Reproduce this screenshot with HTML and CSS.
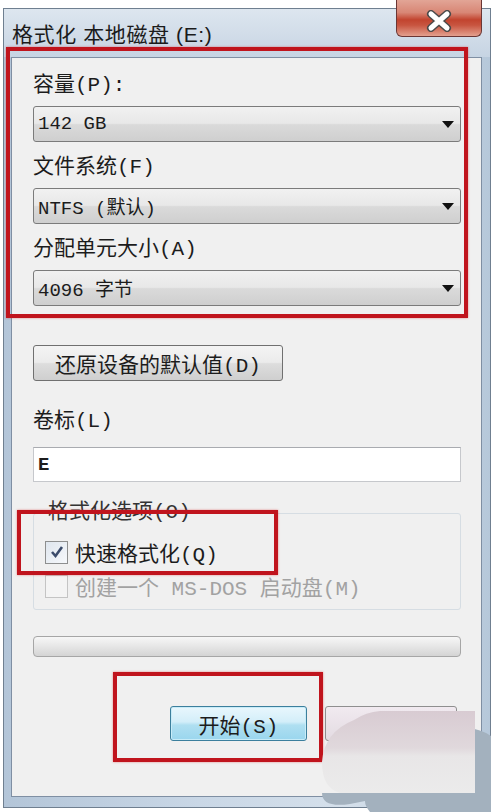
FILE: index.html
```html
<!DOCTYPE html>
<html lang="zh-CN">
<head>
<meta charset="utf-8">
<title>格式化 本地磁盘 (E:)</title>
<link rel="stylesheet" href="styles.css">
</head>
<body>
<div class="window">
  <div class="titlebar"><span class="title">格式化 本地磁盘 (E:)</span></div>
  <div class="close-btn">
    <svg width="30" height="22" viewBox="0 0 30 22">
      <path d="M7 4 L23 18 M23 4 L7 18" stroke="#4a4a4a" stroke-width="8" stroke-linecap="round"/>
      <path d="M7 4 L23 18 M23 4 L7 18" stroke="#ffffff" stroke-width="5" stroke-linecap="round"/>
    </svg>
  </div>
  <div class="client">
    <div class="label first">容量(P):</div>
    <div class="select"><span>142 GB</span><span class="arrow"></span></div>
    <div class="label">文件系统(F)</div>
    <div class="select"><span>NTFS (默认)</span><span class="arrow"></span></div>
    <div class="label">分配单元大小(A)</div>
    <div class="select"><span>4096 字节</span><span class="arrow"></span></div>
    <div class="btn restore">还原设备的默认值(D)</div>
    <div class="label vol">卷标(L)</div>
    <div class="input">E</div>
    <fieldset class="group">
      <legend>格式化选项(O)</legend>
      <div class="check-row">
        <span class="box checked">
          <svg width="16" height="16" viewBox="0 0 16 16"><path d="M3 8 L6.5 12 L13 3" fill="none" stroke="#3b4b6b" stroke-width="2.6"/></svg>
        </span>
        <span>快速格式化(Q)</span>
      </div>
      <div class="check-row disabled">
        <span class="box"></span>
        <span>创建一个 MS-DOS 启动盘(M)</span>
      </div>
    </fieldset>
    <div class="progress"></div>
    <div class="actions">
      <div class="btn start">开始(S)</div>
      <div class="btn closebtn">关闭</div>
    </div>
  </div>
  <div class="mark mark-a"></div>
  <div class="mark mark-b"></div>
  <div class="mark mark-c"></div>
  <svg class="watermark" width="171" height="112" viewBox="0 0 171 112">
    <defs>
      <linearGradient id="wg" x1="0" y1="0" x2="0" y2="1">
        <stop offset="0" stop-color="#d8cbd2"/>
        <stop offset="0.45" stop-color="#e0d8dc"/>
        <stop offset="0.55" stop-color="#e8e6e7"/>
        <stop offset="1" stop-color="#ebebeb"/>
      </linearGradient>
    </defs>
    <path d="M132 34 Q150 22 171 36 L171 112 L50 112 Q40 100 50 93 L132 93 Z" fill="#a3b1be"/>
    <path d="M2 93 Q2 108 30 104 L50 100 L50 93 Z" fill="#a3b1be"/>
    <path d="M2 62 Q4 32 34 20 Q46 12 60 11 L155 11 L155 93 L20 93 Q2 88 2 62 Z" fill="url(#wg)"/>
  </svg>
</div>
</body>
</html>
```

FILE: styles.css
```css
html, body {
  margin: 0;
  padding: 0;
  background: #ffffff;
}

body {
  width: 491px;
  height: 812px;
  overflow: hidden;
  font-family: "Liberation Mono", "Noto Sans CJK SC", monospace;
  color: #1c1c1c;
}

.window {
  position: relative;
  box-sizing: border-box;
  width: 488px;
  height: 800px;
  margin: 8px 0 0 3px;
  border: 1px solid #6f7f90;
  background: linear-gradient(90deg, #b3c5d8 0%, #c9d7e6 40%, #d5e0eb 70%, #b6c8da 100%);
}

.titlebar {
  height: 48px;
  display: flex;
  align-items: center;
  padding-left: 8px;
  background: linear-gradient(180deg, #dde6ef 0%, #d2dde9 50%, #c6d4e3 100%);
}

.title {
  font-family: "Liberation Sans", "Noto Sans CJK SC", sans-serif;
  font-size: 21px;
  color: #1b1b1b;
  letter-spacing: 0.6px;
}

.close-btn {
  position: absolute;
  left: 392px;
  top: -9px;
  width: 86px;
  height: 37px;
  box-sizing: border-box;
  border: 1px solid #6b3634;
  border-top: none;
  border-radius: 0 0 6px 6px;
  background: linear-gradient(180deg, #e2a596 0%, #d88675 35%, #c2442f 55%, #c85540 70%, #e3a08e 100%);
  display: flex;
  align-items: center;
  justify-content: center;
  padding-top: 6px;
}

.client {
  box-sizing: border-box;
  height: 740px;
  margin: 0 8px 0 7px;
  background: #f0f0f0;
  border: 1px solid #7f8fa3;
  padding: 0 20px 0 21px;
  display: flex;
  flex-direction: column;
}

.label {
  font-size: 21px;
  line-height: 26px;
  height: 26px;
  margin-top: 13px;
  margin-bottom: 7px;
  color: #1c1c1c;
}

.label.first {
  margin-top: 15px;
}

.select {
  box-sizing: border-box;
  height: 36px;
  border: 1px solid #7b7b7b;
  border-radius: 3px;
  background: linear-gradient(180deg, #f1f1f1 0%, #e8e8e8 48%, #dadada 52%, #cfcfcf 100%);
  display: flex;
  align-items: center;
  justify-content: space-between;
  padding: 0 6px 0 4px;
  font-size: 19px;
}

.arrow {
  width: 0;
  height: 0;
  border-left: 6px solid transparent;
  border-right: 6px solid transparent;
  border-top: 7px solid #111111;
}

.btn {
  box-sizing: border-box;
  height: 36px;
  border: 1px solid #707070;
  border-radius: 3px;
  background: linear-gradient(180deg, #f4f4f4 0%, #ebebeb 48%, #dddddd 52%, #cfcfcf 100%);
  display: flex;
  align-items: center;
  justify-content: center;
  font-size: 21px;
  color: #1c1c1c;
}

.restore {
  width: 250px;
  margin-top: 39px;
}

.label.vol {
  margin-top: 28px;
  margin-bottom: 12px;
}

.input {
  box-sizing: border-box;
  height: 35px;
  background: #ffffff;
  border: 1px solid #c6c8cc;
  border-top-color: #a9abb0;
  display: flex;
  align-items: center;
  padding-left: 4px;
  font-size: 19px;
  font-weight: bold;
}

.group {
  margin: 18px 0 0 0;
  padding: 0 0 8px 11px;
  border: 1px solid #d6dde3;
  border-radius: 3px;
  min-width: 0;
}

.group legend {
  font-size: 21px;
  line-height: 26px;
  padding: 0 2px;
  margin-left: 1px;
  color: #333333;
}

.check-row {
  display: flex;
  align-items: center;
  gap: 7px;
  height: 30px;
  margin-top: 11px;
  font-size: 21px;
}

.check-row + .check-row {
  margin-top: 4px;
}

.box {
  box-sizing: border-box;
  width: 23px;
  height: 23px;
  border: 1px solid #8e8f8f;
  background: linear-gradient(135deg, #e6e6e6 0%, #fafafa 100%);
  display: flex;
  align-items: center;
  justify-content: center;
}

.box.checked {
  background: linear-gradient(135deg, #dfe6ee 0%, #f6f8fb 100%);
}

.check-row.disabled {
  color: #a2a2a2;
}

.check-row.disabled .box {
  border-color: #c4c4c4;
  background: #f4f4f4;
}

.progress {
  box-sizing: border-box;
  height: 21px;
  margin-top: 26px;
  border: 1px solid #a6a6a6;
  border-radius: 4px;
  background: linear-gradient(180deg, #f7f7f7 0%, #e6e6e6 50%, #d4d4d4 100%);
}

.actions {
  display: flex;
  justify-content: flex-end;
  gap: 18px;
  margin-top: 49px;
  padding-right: 4px;
}

.start {
  width: 137px;
  height: 35px;
  border: 1px solid #3c7f9d;
  background: linear-gradient(180deg, #e9f7fd 0%, #d3eef9 45%, #afdff1 55%, #9ad6ee 100%);
  box-shadow: inset 0 0 0 1px #c8ecf8;
}

.closebtn {
  width: 132px;
  height: 35px;
  border-color: #8f8f8f;
  background: linear-gradient(180deg, #f1eaf0 0%, #e3dbe2 100%);
}

.mark {
  position: absolute;
  box-sizing: border-box;
  border: 4px solid #c0141d;
  box-shadow: 0 0 2px rgba(220, 60, 60, 0.6);
}

.mark-a {
  left: 2px;
  top: 38px;
  width: 462px;
  height: 271px;
}

.mark-b {
  left: 13px;
  top: 501px;
  width: 261px;
  height: 65px;
}

.mark-c {
  left: 109px;
  top: 663px;
  width: 210px;
  height: 90px;
}

.watermark {
  position: absolute;
  left: 316px;
  top: 691px;
}
```
